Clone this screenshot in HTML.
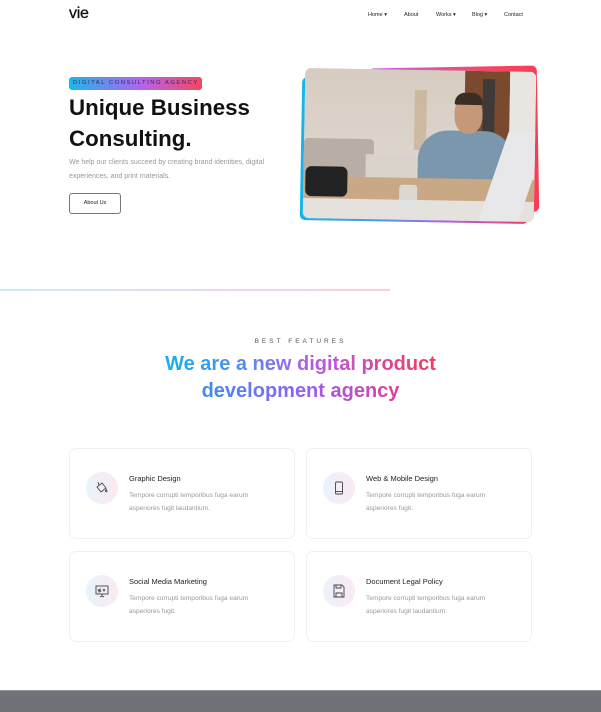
<!DOCTYPE html>
<html><head><meta charset="utf-8"><style>
*{margin:0;padding:0;box-sizing:border-box}
body{width:601px;height:712px;background:#fff;font-family:"Liberation Sans",sans-serif;position:relative;overflow:hidden;color:#111}
.a{position:absolute}
.nav{font-size:5.5px;color:#222;top:12px}
.g{-webkit-background-clip:text;background-clip:text;color:transparent}
.card{position:absolute;width:226px;height:91px;border:1px solid #f0f0f3;border-radius:7px;background:#fff}
.ic{position:absolute;left:16px;top:23px;width:32px;height:32px;border-radius:50%;background:linear-gradient(90deg,#e9f3fc,#fbe9f1)}
.ic svg{position:absolute;left:8px;top:8px}
.ct{position:absolute;left:59px;top:25px;font-size:7.5px;color:#222}
.cd{position:absolute;left:59px;top:41px;font-size:6.6px;color:#999;line-height:12.5px;width:140px}
</style></head><body>
<div class="a" style="left:69px;top:5px;font-size:16px;letter-spacing:-0.3px;-webkit-text-stroke:0.3px #111">vie</div>
<div class="a nav" style="left:368px">Home ▾</div>
<div class="a nav" style="left:404px">About</div>
<div class="a nav" style="left:436px">Works ▾</div>
<div class="a nav" style="left:472px">Blog ▾</div>
<div class="a nav" style="left:504px">Contact</div>

<div class="a" style="left:69px;top:77px;width:133px;height:13px;border-radius:3px;background:linear-gradient(90deg,#1ab7ea,#b463ee 55%,#f6475e);font-size:5.9px;letter-spacing:1.5px;color:#3a2a5a;line-height:13px;padding-left:4px;white-space:nowrap;overflow:hidden">DIGITAL CONSULTING AGENCY</div>
<div class="a" style="left:69px;top:92px;font-size:22.3px;font-weight:bold;line-height:31px;color:#111">Unique Business<br>Consulting.</div>
<div class="a" style="left:69px;top:156px;font-size:7px;color:#999;line-height:13.5px">We help our clients succeed by creating brand identities, digital<br>experiences, and print materials.</div>
<div class="a" style="left:69px;top:193px;width:52px;height:21px;border:1px solid #777;border-radius:3px;font-size:5.5px;text-align:center;line-height:19px;color:#222">About Us</div>

<div class="a" style="left:301px;top:79px;width:228px;height:143px;border-radius:5px;background:linear-gradient(90deg,#14b5ea,#5a8ef0 40%,#b060ee 65%,#f04060);transform:rotate(1deg)"></div>
<div class="a" style="left:370px;top:67px;width:168px;height:146px;border-radius:5px;background:linear-gradient(90deg,#c462e6,#f24864 70%,#f73e55);transform:rotate(-1deg)"></div>
<div class="a" style="left:304px;top:70px;width:231px;height:150px;border-radius:6px;overflow:hidden;background:#d9cfc6;transform:rotate(1deg)">
 <div class="a" style="left:0;top:0;width:160px;height:150px;background:linear-gradient(180deg,#d6ccc2,#e2dbd3)"></div>
 <div class="a" style="left:160px;top:0;width:45px;height:120px;background:#7a4a2e"></div>
 <div class="a" style="left:178px;top:8px;width:12px;height:112px;background:#3d3a38"></div>
 <div class="a" style="left:205px;top:0;width:26px;height:130px;background:#e9e6e2"></div>
 <div class="a" style="left:0;top:70px;width:70px;height:40px;background:#b9aea5;border-radius:4px"></div>
 <div class="a" style="left:62px;top:85px;width:50px;height:30px;background:#d9d3cc"></div>
 <div class="a" style="left:110px;top:20px;width:12px;height:60px;background:#c4a888;opacity:.6"></div>
 <div class="a" style="left:114px;top:60px;width:96px;height:70px;border-radius:30px 30px 6px 6px;background:#7a97ad"></div>
 <div class="a" style="left:150px;top:25px;width:28px;height:38px;border-radius:45%;background:#c59878"></div>
 <div class="a" style="left:150px;top:22px;width:28px;height:12px;border-radius:12px 12px 2px 2px;background:#3a2d24"></div>
 <div class="a" style="left:0;top:108px;width:231px;height:42px;background:#c9a886"></div>
 <div class="a" style="left:0;top:130px;width:231px;height:20px;background:#e5e2de"></div>
 <div class="a" style="left:2px;top:98px;width:42px;height:30px;border-radius:6px;background:#222"></div>
 <div class="a" style="left:190px;top:60px;width:40px;height:90px;background:#e8e8ea;transform:skewX(-18deg)"></div>
 <div class="a" style="left:96px;top:115px;width:18px;height:22px;border-radius:3px;background:#dfe3e4;opacity:.8"></div>
</div>

<div class="a" style="left:0;top:289px;width:390px;height:2px;background:linear-gradient(90deg,#c7ecfa,#e6d7fa 50%,#fbcfdc)"></div>

<div class="a" style="left:0;width:601px;top:338px;text-align:center;font-size:6.5px;letter-spacing:3px;color:#555">BEST FEATURES</div>
<div class="a" style="left:0;width:601px;top:351px;text-align:center;font-size:20px;line-height:27px;font-weight:bold"><span class="g" style="background-image:linear-gradient(90deg,#0fb3ea,#5a8af0 30%,#b35ceb 55%,#f23a5e)">We are a new digital product</span><br><span class="g" style="background-image:linear-gradient(90deg,#3a8ef0,#9a5ef0 55%,#e0409a)">development agency</span></div>

<div class="card" style="left:69px;top:448px"><div class="ic"><svg width="16" height="16" viewBox="0 0 16 16" fill="none" stroke="#444" stroke-width="0.9"><path d="M3 7l5-4 4 5-5 4z M5 5L4 2 M13 11c0 1.2-1.5 1.2-1.5 0l.75-1.5z"/></svg></div><div class="ct">Graphic Design</div><div class="cd">Tempore corrupti temporibus fuga earum asperiores fugit laudantium.</div></div>
<div class="card" style="left:306px;top:448px"><div class="ic"><svg width="16" height="16" viewBox="0 0 16 16" fill="none" stroke="#444" stroke-width="0.9"><rect x="4.5" y="2" width="7" height="12" rx="1"/><path d="M4.5 11.5h7"/></svg></div><div class="ct">Web &amp; Mobile Design</div><div class="cd">Tempore corrupti temporibus fuga earum asperiores fugit.</div></div>
<div class="card" style="left:69px;top:551px"><div class="ic"><svg width="16" height="16" viewBox="0 0 16 16" fill="none" stroke="#444" stroke-width="0.9"><rect x="2" y="3" width="12" height="8"/><path d="M4 6l1 3 1-3 1 3 M9 6l1 2 1-2 M8 11v2 M6 14l2-1 2 1"/></svg></div><div class="ct">Social Media Marketing</div><div class="cd">Tempore corrupti temporibus fuga earum asperiores fugit.</div></div>
<div class="card" style="left:306px;top:551px"><div class="ic"><svg width="16" height="16" viewBox="0 0 16 16" fill="none" stroke="#444" stroke-width="0.9"><path d="M3 2h8l2 2v10H3z M5 2v3h5V2 M5 14v-4h6v4"/></svg></div><div class="ct">Document Legal Policy</div><div class="cd">Tempore corrupti temporibus fuga earum asperiores fugit laudantium.</div></div>

<div class="a" style="left:0;top:690px;width:601px;height:22px;background:#6e7276;border-top:1px solid #999"></div>
</body></html>
